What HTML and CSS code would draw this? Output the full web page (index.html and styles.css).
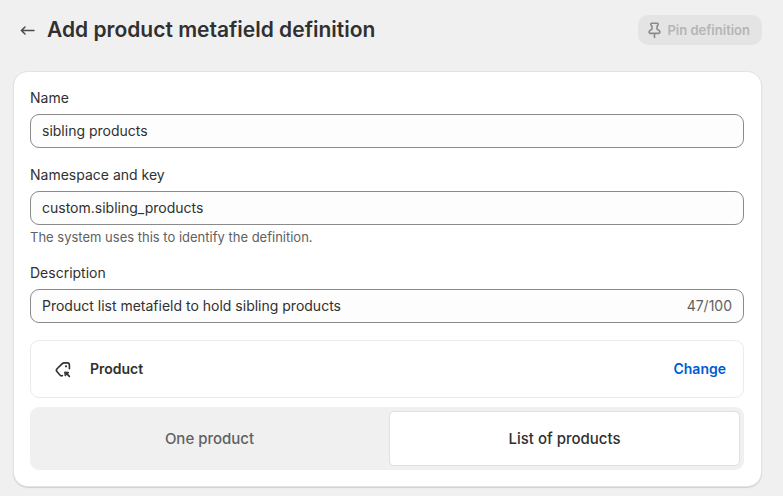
FILE: index.html
```html
<!DOCTYPE html>
<html lang="en">
<head>
    <meta charset="UTF-8">
    <meta name="viewport" content="width=device-width, initial-scale=1.0">
    <title>Add product metafield definition</title>
    <link rel="stylesheet" href="styles.css">
</head>
<body>
    <header class="page-header">
        <a href="#" class="back-link" aria-label="Back">
            <svg width="16" height="16" viewBox="0 0 16 16" fill="none" stroke="#4a4a4a" stroke-width="1.5" stroke-linecap="round" stroke-linejoin="round"><path d="M15 8.5H2.5M6 5L2.4 8.5L6 12"/></svg>
        </a>
        <h1>Add product metafield definition</h1>
        <button type="button" class="pin-button" disabled>
            <svg width="14" height="18" viewBox="0 0 14 18" fill="none" stroke="#8a8a8a" stroke-width="1.6" stroke-linecap="round" stroke-linejoin="round"><path d="M4.8 2.2H10.2C11.3 2.2 11.4 3.6 10.8 4.4L10 5.2V8L12.2 9.6C13.4 10.6 13 12.4 11.6 12.4H3.4C2 12.4 1.6 10.6 2.8 9.6L5 8V5.2L4.2 4.4C3.6 3.6 3.7 2.2 4.8 2.2ZM7.5 12.4V16.4"/></svg>
            <span>Pin definition</span>
        </button>
    </header>

    <main>
        <form class="card">
            <div class="field">
                <label for="name">Name</label>
                <div class="text-box"><input type="text" id="name" value="sibling products"></div>
            </div>
            <div class="field">
                <label for="key">Namespace and key</label>
                <div class="text-box"><input type="text" id="key" value="custom.sibling_products" aria-describedby="key-help"></div>
                <p class="help" id="key-help">The system uses this to identify the definition.</p>
            </div>
            <div class="field">
                <label for="description">Description</label>
                <div class="text-box">
                    <input type="text" id="description" maxlength="100" value="Product list metafield to hold sibling products">
                    <span class="counter">47/100</span>
                </div>
            </div>
            <div class="type-group">
                <div class="type-row">
                    <svg width="18" height="18" viewBox="0 0 18 18" fill="none" stroke="#303030" stroke-width="1.6" stroke-linecap="round" stroke-linejoin="round"><path d="M15.4 8.8V5C15.4 3.6 14.6 2.9 13.2 2.9H10.4C9.4 2.9 8.7 3.2 8 3.9L3.1 8.8C2.2 9.7 2.2 10.9 3.1 11.8L6.2 15.2C6.8 15.8 7.6 16 8.4 15.6"/><circle cx="12" cy="6.3" r="1.1" fill="#303030" stroke="none"/><path d="M11 12L15 12.4L11.4 15.8Z" fill="#303030" stroke-width="1"/><path d="M12.8 13.6L15.4 16.4"/></svg>
                    <span class="type-name">Product</span>
                    <button type="button" class="change-button">Change</button>
                </div>
                <div class="segmented">
                    <button type="button" aria-pressed="false">One product</button>
                    <button type="button" class="selected" aria-pressed="true">List of products</button>
                </div>
            </div>
        </form>
    </main>
</body>
</html>
```
FILE: styles.css
```css
* {margin:0;padding:0;box-sizing:border-box;}
body {background-color:#f0f0f0;color:#303030;font-family:'Inter',sans-serif;font-size:14px;line-height:20px;padding:15px 21px 10px 14px;}
button, input {font:inherit;color:inherit;border:none;background:none;}
svg {display:block;flex:none;}
main {padding-right:1px;}
.page-header {display:flex;align-items:center;height:30px;margin-bottom:27px;padding-left:5px;}
.back-link {margin-right:12px;}
.page-header h1 {font-size:21px;line-height:28px;font-weight:600;flex:1;white-space:nowrap;}
.pin-button {display:flex;align-items:center;gap:6px;height:30px;padding:0 12px 0 9px;border-radius:10px;background-color:#e4e4e4;color:#b5b5b5;font-size:13px;font-weight:600;}
.card {display:flex;flex-direction:column;gap:17px;padding:16px 17px 16px 16px;background-color:#fff;border-radius:14px;box-shadow:0 0 0 1px #e3e3e3,0 1px 1px 1px #d0d0d0;}
.field label {display:block;margin-bottom:6px;}
.text-box {display:flex;align-items:center;height:34px;padding:0 11px;border:1px solid #8a8a8a;border-radius:9px;background-color:#fdfdfd;}
.text-box input {flex:1;min-width:0;height:20px;outline:none;}
.counter {color:#616161;}
.help {margin-top:3px;font-size:13px;line-height:18px;color:#616161;}
.type-group {display:flex;flex-direction:column;gap:9px;}
.type-row {display:flex;align-items:center;height:58px;padding:0 17px 0 23px;border:1px solid #ebebeb;border-radius:9px;}
.type-name {flex:1;margin-left:18px;font-weight:600;}
.change-button {color:#005bd3;font-weight:600;}
.segmented {display:grid;grid-template-columns:1fr 1fr;gap:4px;height:63px;padding:4px;border-radius:9px;background-color:#f0f0f0;}
.segmented button {font-size:15px;font-weight:550;color:#616161;border-radius:5px;}
.segmented .selected {color:#303030;background-color:#fff;border:1px solid #e0e0e0;}
```
